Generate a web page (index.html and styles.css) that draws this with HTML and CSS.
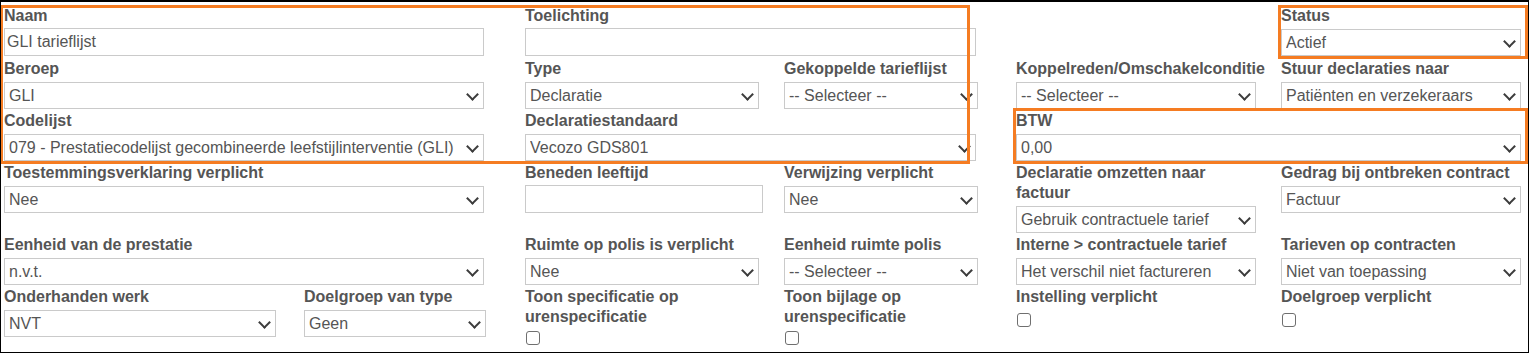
FILE: index.html
```html
<!DOCTYPE html>
<html lang="nl">
<head>
<meta charset="utf-8">
<title>Tarieflijst</title>
<link rel="stylesheet" href="styles.css">
</head>
<body>
<div class="frame">
  <form class="grid">
    <!-- row 1 -->
    <div class="field f-wide">
      <label class="lbl" for="naam">Naam</label>
      <input class="txt" id="naam" type="text" value="GLI tarieflijst">
    </div>
    <div class="field f-pair span-23">
      <label class="lbl" for="toel">Toelichting</label>
      <input class="txt" id="toel" type="text" value="">
    </div>
    <div class="field f-side col-5">
      <label class="lbl" for="status">Status</label>
      <div class="sel"><select id="status"><option>Actief</option></select></div>
    </div>

    <!-- row 2 -->
    <div class="field f-wide">
      <label class="lbl" for="beroep">Beroep</label>
      <div class="sel"><select id="beroep"><option>GLI</option></select></div>
    </div>
    <div class="field f-mid">
      <label class="lbl" for="type">Type</label>
      <div class="sel"><select id="type"><option>Declaratie</option></select></div>
    </div>
    <div class="field f-narrow">
      <label class="lbl" for="gekop">Gekoppelde tarieflijst</label>
      <div class="sel"><select id="gekop"><option>-- Selecteer --</option></select></div>
    </div>
    <div class="field f-side">
      <label class="lbl" for="koppel">Koppelreden/Omschakelconditie</label>
      <div class="sel"><select id="koppel"><option>-- Selecteer --</option></select></div>
    </div>
    <div class="field f-side">
      <label class="lbl" for="stuur">Stuur declaraties naar</label>
      <div class="sel"><select id="stuur"><option>Patiënten en verzekeraars</option></select></div>
    </div>

    <!-- row 3 -->
    <div class="field f-wide">
      <label class="lbl" for="codelijst">Codelijst</label>
      <div class="sel"><select id="codelijst"><option>079 - Prestatiecodelijst gecombineerde leefstijlinterventie (GLI)</option></select></div>
    </div>
    <div class="field f-pair span-23">
      <label class="lbl" for="decstd">Declaratiestandaard</label>
      <div class="sel"><select id="decstd"><option>Vecozo GDS801</option></select></div>
    </div>
    <div class="field f-btw span-45">
      <label class="lbl" for="btw">BTW</label>
      <div class="sel"><select id="btw"><option>0,00</option></select></div>
    </div>

    <!-- row 4 -->
    <div class="field f-wide">
      <label class="lbl" for="toest">Toestemmingsverklaring verplicht</label>
      <div class="sel"><select id="toest"><option>Nee</option></select></div>
    </div>
    <div class="field f-mid">
      <label class="lbl" for="leeftijd">Beneden leeftijd</label>
      <input class="txt txt-age" id="leeftijd" type="text" value="">
    </div>
    <div class="field f-narrow">
      <label class="lbl" for="verw">Verwijzing verplicht</label>
      <div class="sel"><select id="verw"><option>Nee</option></select></div>
    </div>
    <div class="field f-side">
      <label class="lbl" for="omzet">Declaratie omzetten naar factuur</label>
      <div class="sel"><select id="omzet"><option>Gebruik contractuele tarief</option></select></div>
    </div>
    <div class="field f-side">
      <label class="lbl" for="gedrag">Gedrag bij ontbreken contract</label>
      <div class="sel"><select id="gedrag"><option>Factuur</option></select></div>
    </div>

    <!-- row 5 -->
    <div class="field f-wide">
      <label class="lbl" for="eenheid">Eenheid van de prestatie</label>
      <div class="sel"><select id="eenheid"><option>n.v.t.</option></select></div>
    </div>
    <div class="field f-mid">
      <label class="lbl" for="ruimte">Ruimte op polis is verplicht</label>
      <div class="sel"><select id="ruimte"><option>Nee</option></select></div>
    </div>
    <div class="field f-narrow">
      <label class="lbl" for="eruimte">Eenheid ruimte polis</label>
      <div class="sel"><select id="eruimte"><option>-- Selecteer --</option></select></div>
    </div>
    <div class="field f-side">
      <label class="lbl" for="interne">Interne &gt; contractuele tarief</label>
      <div class="sel"><select id="interne"><option>Het verschil niet factureren</option></select></div>
    </div>
    <div class="field f-side">
      <label class="lbl" for="tarieven">Tarieven op contracten</label>
      <div class="sel"><select id="tarieven"><option>Niet van toepassing</option></select></div>
    </div>

    <!-- row 6 -->
    <div class="pair">
      <div class="field f-ohw">
        <label class="lbl" for="ohw">Onderhanden werk</label>
        <div class="sel"><select id="ohw"><option>NVT</option></select></div>
      </div>
      <div class="field f-dgt">
        <label class="lbl" for="dgt">Doelgroep van type</label>
        <div class="sel"><select id="dgt"><option>Geen</option></select></div>
      </div>
    </div>
    <div class="field f-mid">
      <label class="lbl" for="tspec">Toon specificatie op urenspecificatie</label>
      <input class="chk" id="tspec" type="checkbox">
    </div>
    <div class="field f-narrow">
      <label class="lbl" for="tbij">Toon bijlage op urenspecificatie</label>
      <input class="chk" id="tbij" type="checkbox">
    </div>
    <div class="field f-side">
      <label class="lbl" for="inst">Instelling verplicht</label>
      <input class="chk chk-single" id="inst" type="checkbox">
    </div>
    <div class="field f-side">
      <label class="lbl" for="dgv">Doelgroep verplicht</label>
      <input class="chk chk-single" id="dgv" type="checkbox">
    </div>
  </form>

  <div class="mark mark-main"></div>
  <div class="mark mark-status"></div>
  <div class="mark mark-btw"></div>
</div>
</body>
</html>
```

FILE: styles.css
```css
* {
  box-sizing: border-box;
}

html,
body {
  margin: 0;
  padding: 0;
  background: #fff;
}

body {
  font-family: "Liberation Sans", Arial, sans-serif;
  font-size: 16px;
  color: #555;
}

.frame {
  position: relative;
  width: 1529px;
  height: 353px;
  border: 1px solid #000;
  border-top-width: 2px;
  overflow: hidden;
  background: #fff;
}

.grid {
  display: grid;
  grid-template-columns: 521px 259px 232px 265px 240px;
  align-items: start;
  padding: 4px 0 0 3px;
}

.span-23 {
  grid-column: 2 / 4;
}

.span-45 {
  grid-column: 4 / 6;
}

.col-5 {
  grid-column: 5;
}

.field {
  display: block;
}

.f-wide { width: 480px; }
.f-mid { width: 234px; }
.f-narrow { width: 194px; }
.f-side { width: 240px; }
.f-pair { width: 451px; }
.f-btw { width: 505px; }
.f-ohw { width: 272px; }
.f-dgt { width: 182px; }

.pair {
  display: flex;
  gap: 28px;
}

.lbl {
  display: block;
  font-weight: bold;
  line-height: 20px;
  color: #555;
}

.txt {
  display: block;
  width: 100%;
  height: 28px;
  margin: 2px 0 3px;
  padding: 1px 2px;
  border: 1px solid #cacaca;
  border-radius: 0;
  background: #fff;
  font-family: "Liberation Sans", Arial, sans-serif;
  font-size: 16px;
  color: #555;
  outline: none;
}

.txt-age {
  width: 238px;
}

.sel {
  position: relative;
  width: 100%;
  margin: 3px 0 2px;
}

.sel select {
  -webkit-appearance: none;
  appearance: none;
  display: block;
  width: 100%;
  height: 27px;
  margin: 0;
  padding: 0 22px 0 4px;
  border: 1px solid #cacaca;
  border-radius: 0;
  background: #fff;
  font-family: "Liberation Sans", Arial, sans-serif;
  font-size: 16px;
  color: #555;
  outline: none;
}

.sel::after {
  content: "";
  position: absolute;
  right: 7px;
  top: 50%;
  width: 7px;
  height: 7px;
  margin-top: -6px;
  border-right: 2px solid #3c3c3c;
  border-bottom: 2px solid #3c3c3c;
  transform: rotate(45deg);
  pointer-events: none;
}

.chk {
  -webkit-appearance: none;
  appearance: none;
  display: block;
  width: 14px;
  height: 14px;
  margin: 4px 0 0 1px;
  border: 1px solid #6f6f6f;
  border-radius: 3px;
  background: #fff;
}

.chk-single {
  margin-top: 6px;
}

.mark {
  position: absolute;
  border: 3px solid #f57c22;
  pointer-events: none;
}

.mark-main {
  left: -1px;
  top: 3px;
  width: 970px;
  height: 159px;
}

.mark-status {
  left: 1277px;
  top: 3px;
  width: 250px;
  height: 54px;
}

.mark-btw {
  left: 1012px;
  top: 106px;
  width: 515px;
  height: 56px;
}
```
